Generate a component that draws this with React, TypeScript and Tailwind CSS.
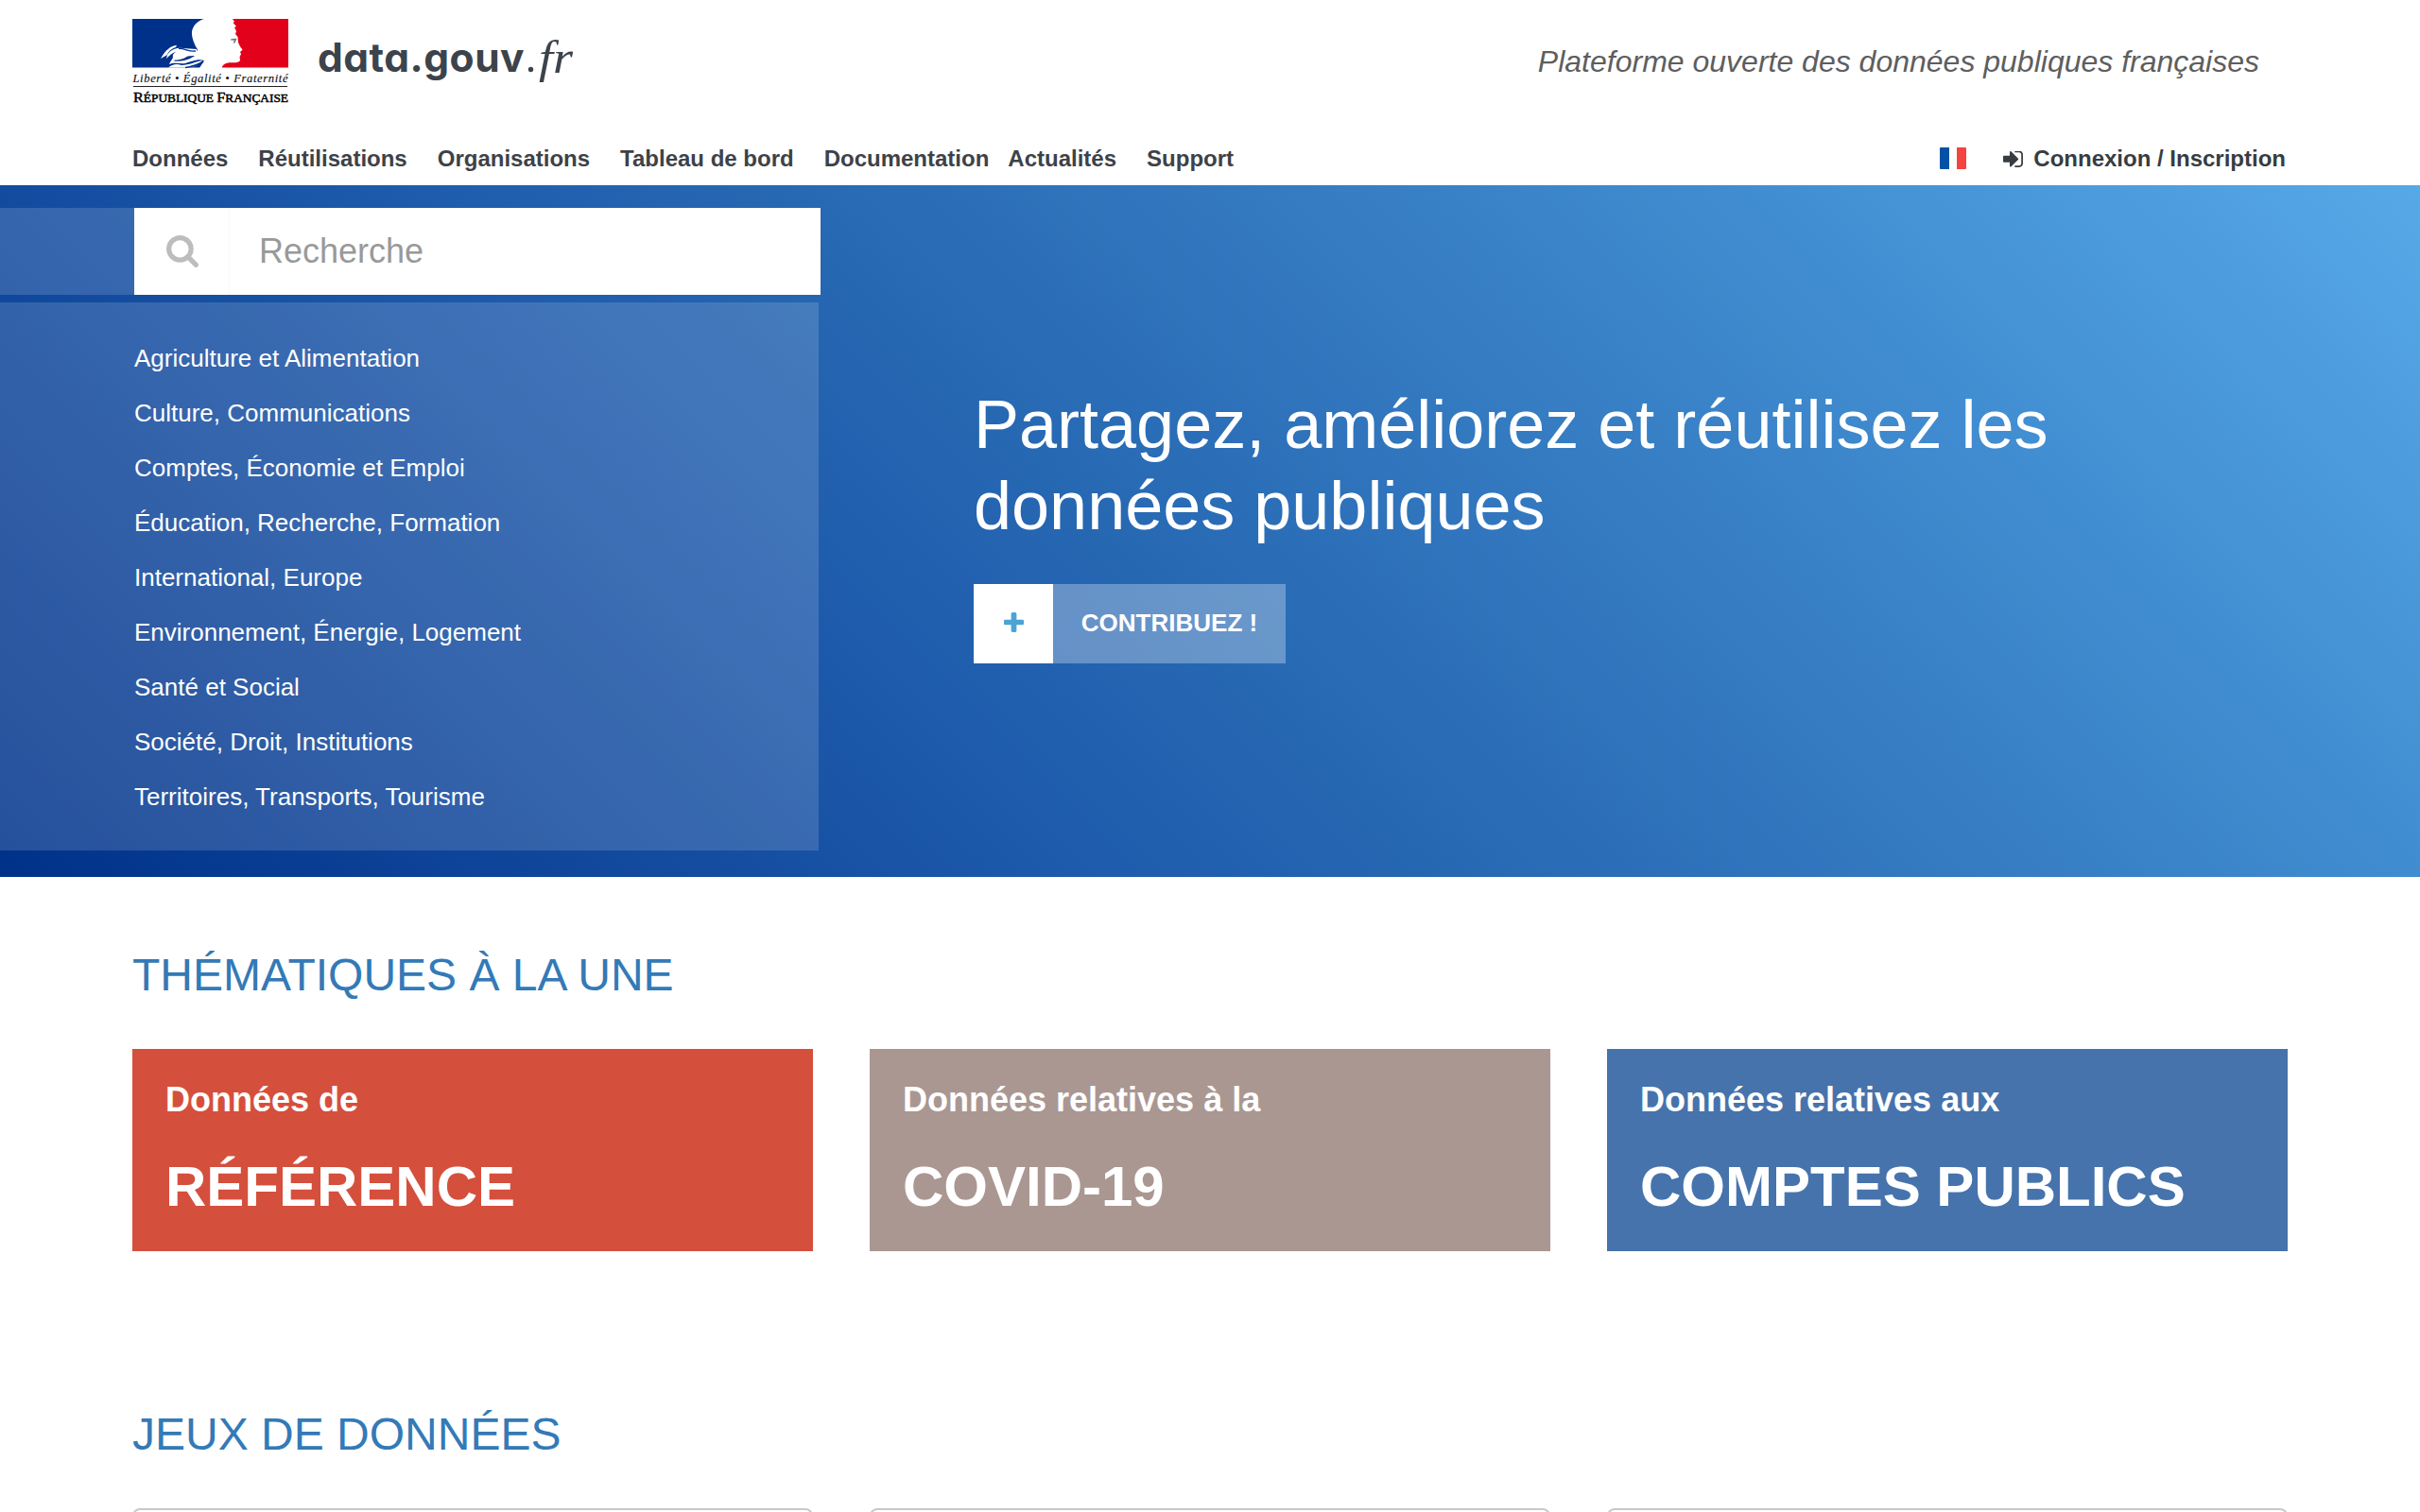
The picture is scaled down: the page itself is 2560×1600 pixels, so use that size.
import React from "react";

const nav = [
  { label: "Données", gap: "mr-8" },
  { label: "Réutilisations", gap: "mr-8" },
  { label: "Organisations", gap: "mr-8" },
  { label: "Tableau de bord", gap: "mr-8" },
  { label: "Documentation", gap: "mr-5" },
  { label: "Actualités", gap: "mr-8" },
  { label: "Support", gap: "" },
];

const topics = [
  "Agriculture et Alimentation",
  "Culture, Communications",
  "Comptes, Économie et Emploi",
  "Éducation, Recherche, Formation",
  "International, Europe",
  "Environnement, Énergie, Logement",
  "Santé et Social",
  "Société, Droit, Institutions",
  "Territoires, Transports, Tourisme",
];

const themes = [
  { intro: "Données de", title: "RÉFÉRENCE", color: "bg-[#d54f3d]" },
  { intro: "Données relatives à la", title: "COVID-19", color: "bg-[#aa9792]" },
  { intro: "Données relatives aux", title: "COMPTES PUBLICS", color: "bg-[#4673ac]" },
];

function RepubliqueLogo() {
  return (
    <svg width="168" height="92" viewBox="0 0 168 92" className="block shrink-0">
      <rect x="0" y="0" width="76" height="51.5" fill="#00318a" />
      <rect x="94" y="0" width="71" height="51.5" fill="#e2001a" />
      <path d="M76 0C69 2 65 6 63 13C62.500 18 64 22 66 27C67 30 69 31 69 33L65 39L70 43L76 44L71 52H95V30L108 19L105 0Z" fill="#fff" />
      <path d="M106 0L108 3L106.500 4L110 8L108 9L110 13L109 16L111.500 19L112 25Q113.500 29 116.500 32.500Q116 34 114 34.500L115 37.500L113.500 40L114 44C112 47.500 105 45.500 101 46.500C97 47.500 95.500 49 94.500 52H86V0Z" fill="#fff" />
      <g fill="#fff">
        <path d="M30 42C35 33 41 28 47 28L46 30C40 32 38 35 36 39C40 34 44 30 53 31L68 32L69 38C64 40 60 38 56 41C50 44 47 43 43 44C48 46 56 44 61 42C66 39 69 38 72 38L71 43C65 44 61 45 56 47C50 48 45 45 39 48C40 45 42 43 43 41C42 37 45 36 46 35C42 36 39 39 36 42L37 38Z" />
        <path d="M38 51.500C42 48 47 47 52 49C60 49 67 45 74 44C71 47 67 51 60 51.500Z" />
      </g>
      <g fill="none" stroke="#00318a">
        <path d="M49 31.500C56 31 59 35 67 34" strokeWidth="1.300" />
        <path d="M56 51.500C64 51 69 48 75 45.500" strokeWidth="1.500" />
      </g>
      <path d="M104 21.500C106 21 108 20.500 110.500 21L109.500 23L108.500 25.500H106.500L108 22.800Q106 22.500 104 22.500Z" fill="#777" />
      <text x="0.500" y="67" fontFamily="'Liberation Serif', serif" fontStyle="italic" fontSize="12.500" fill="#111" stroke="#111" strokeWidth="0.150" textLength="164" lengthAdjust="spacing">
        Liberté • Égalité • Fraternité
      </text>
      <rect x="1" y="71" width="163" height="1" fill="#222" />
      <text x="1" y="87.500" fontFamily="'Liberation Serif', serif" fontSize="15.500" fill="#000" stroke="#000" strokeWidth="0.500" textLength="164" lengthAdjust="spacingAndGlyphs">
        R<tspan fontSize="12.700">ÉPUBLIQUE </tspan>F<tspan fontSize="12.700">RANÇAISE</tspan>
      </text>
    </svg>
  );
}

function SiteName() {
  return (
    <div className="ml-7 flex h-[60px] items-start text-[#3d434b]">
      <span className="block w-[221px] font-['Inter'] text-[42.5px] leading-[60px] font-bold tracking-[0.5px] whitespace-nowrap [font-feature-settings:'cv11']">
        data.gouv
      </span>
      <svg width="60" height="60" viewBox="0 0 60 60" className="block" fill="#3d434b">
        <circle cx="4.500" cy="42.500" r="2.700" />
        <text x="13" y="45.500" fontFamily="'Liberation Serif', serif" fontStyle="italic" fontSize="49" textLength="36" lengthAdjust="spacingAndGlyphs">
          fr
        </text>
      </svg>
    </div>
  );
}

function SignInIcon() {
  return (
    <svg width="21" height="17" viewBox="0 288 1536 1248" className="mr-[11px] block" fill="#373c42">
      <path d="M1184 896q0 26-19 45l-544 544q-19 19-45 19t-45-19-19-45v-288H64q-26 0-45-19T0 1088V704q0-26 19-45t45-19h448V352q0-26 19-45t45-19 45 19l544 544q19 19 19 45zm352-352v704q0 119-84.500 203.500T1248 1536H928q-13 0-22.500-9.500T896 1504q0-4-1-20t-.5-26.500 3-23.500 10-19.500 20.500-6.500h320q66 0 113-47t47-113V544q0-66-47-113t-113-47H936l-11.500-1-11.500-3-8-5.500-7-9-2-13.500q0-4-1-20t-.5-26.500 3-23.500 10-19.500 20.500-6.500h320q119 0 203.500 84.500T1536 544z" />
    </svg>
  );
}

function SearchIcon() {
  return (
    <svg width="34" height="34" viewBox="0 0 1664 1664" className="ml-px block" fill="#bdbdbd">
      <path d="M1152 704q0-185-131.500-316.500T704 256 387.500 387.500 256 704t131.500 316.500T704 1152t316.500-131.500T1152 704zm512 832q0 52-38 90t-90 38q-54 0-90-38l-343-342q-179 124-399 124-143 0-273.500-55.500t-225-150-150-225T0 704t55.500-273.500 150-225 225-150T704 0t273.500 55.500 225 150 150 225T1408 704q0 220-124 399l343 343q37 37 37 90z" />
    </svg>
  );
}

function PlusIcon() {
  return (
    <svg width="21" height="21" viewBox="0 0 1408 1408" className="mb-1 block" fill="#4ba4d4">
      <path d="M1408 608v192q0 40-28 68t-68 28H896v416q0 40-28 68t-68 28H608q-40 0-68-28t-28-68V896H96q-40 0-68-28T0 800V608q0-40 28-68t68-28h416V96q0-40 28-68t68-28h192q40 0 68 28t28 68v416h416q40 0 68 28t28 68z" />
    </svg>
  );
}

export default function App() {
  return (
    <div className="h-[1600px] w-[2560px] overflow-hidden bg-white font-['Liberation_Sans',Arial,sans-serif]">
      <header className="flex h-[196px] flex-col pl-[140px] pr-[142px]">
        <div className="flex h-[140px] items-start justify-between pt-5">
          <div className="flex items-start">
            <RepubliqueLogo />
            <div className="pt-[11px]">
              <SiteName />
            </div>
          </div>
          <p className="mr-7 mt-[25px] text-[32px] leading-[40px] text-[#5e5e5e] italic">
            Plateforme ouverte des données publiques françaises
          </p>
        </div>
        <nav className="flex h-14 items-center text-2xl leading-[56px] font-bold text-[#3d4248]">
          {nav.map((n) => (
            <a key={n.label} className={"block h-14 " + n.gap}>
              {n.label}
            </a>
          ))}
          <div className="ml-auto flex h-14 items-center">
            <span className="mr-[39px] mb-0.5 flex h-[23px] w-[28px] justify-between">
              <i className="block w-[10px] rounded-l-[1px] bg-[#0052a5]" />
              <i className="block w-[10px] rounded-r-[1px] bg-[#f5433f]" />
            </span>
            <SignInIcon />
            <a className="block h-14 text-[#373c42]">Connexion / Inscription</a>
          </div>
        </nav>
      </header>

      <section className="flex h-[732px] bg-[linear-gradient(45deg,#003189_0%,#1f5cad_36%,#2667b2_46%,#367dc3_65%,#438fd3_80%,#56a9e7_100%)] pt-6">
        <div className="w-[868px]">
          <div className="flex h-[92px]">
            <div className="w-[142px] bg-white/15" />
            <div className="flex flex-1 items-center bg-white">
              <div className="flex h-full w-[101px] items-center justify-center border-r border-[#f8f8f8]">
                <SearchIcon />
              </div>
              <span className="pl-[31px] text-4xl text-[#999]">Recherche</span>
            </div>
          </div>
          <ul className="mt-2 h-[580px] w-[866px] bg-white/15 pt-[30px] pl-[142px]">
            {topics.map((t) => (
              <li key={t} className="h-[58px] text-[26px] leading-[58px] text-white">
                {t}
              </li>
            ))}
          </ul>
        </div>
        <div className="pt-[186px] pl-[162px]">
          <h1 className="w-[1200px] text-[72px] leading-[86px] text-white">
            Partagez, améliorez et réutilisez les données publiques
          </h1>
          <div className="mt-[40px] flex h-[84px] w-[330px]">
            <span className="flex w-[84px] items-center justify-center bg-white">
              <PlusIcon />
            </span>
            <span className="flex flex-1 items-center justify-center bg-white/30 pb-0.5 text-[26px] font-bold text-white">
              CONTRIBUEZ !
            </span>
          </div>
        </div>
      </section>

      <section className="px-[140px] pt-[76px]">
        <h2 className="text-5xl leading-[56px] text-[#337ab7]">THÉMATIQUES À LA UNE</h2>
        <div className="mt-[50px] grid grid-cols-3 gap-[60px]">
          {themes.map((t) => (
            <article key={t.title} className={"h-[214px] px-[35px] pt-[30px] font-bold text-white " + t.color}>
              <p className="text-4xl leading-[48px]">{t.intro}</p>
              <p className="mt-[32px] text-[60px] leading-[72px]">{t.title}</p>
            </article>
          ))}
        </div>
      </section>

      <section className="px-[140px] pt-[166px]">
        <h2 className="text-5xl leading-[56px] text-[#337ab7]">JEUX DE DONNÉES</h2>
        <div className="mt-[50px] grid grid-cols-3 gap-[60px]">
          {themes.map((t) => (
            <div key={t.title} className="h-[214px] rounded-lg border-2 border-[#c8c8c8]" />
          ))}
        </div>
      </section>
    </div>
  );
}
